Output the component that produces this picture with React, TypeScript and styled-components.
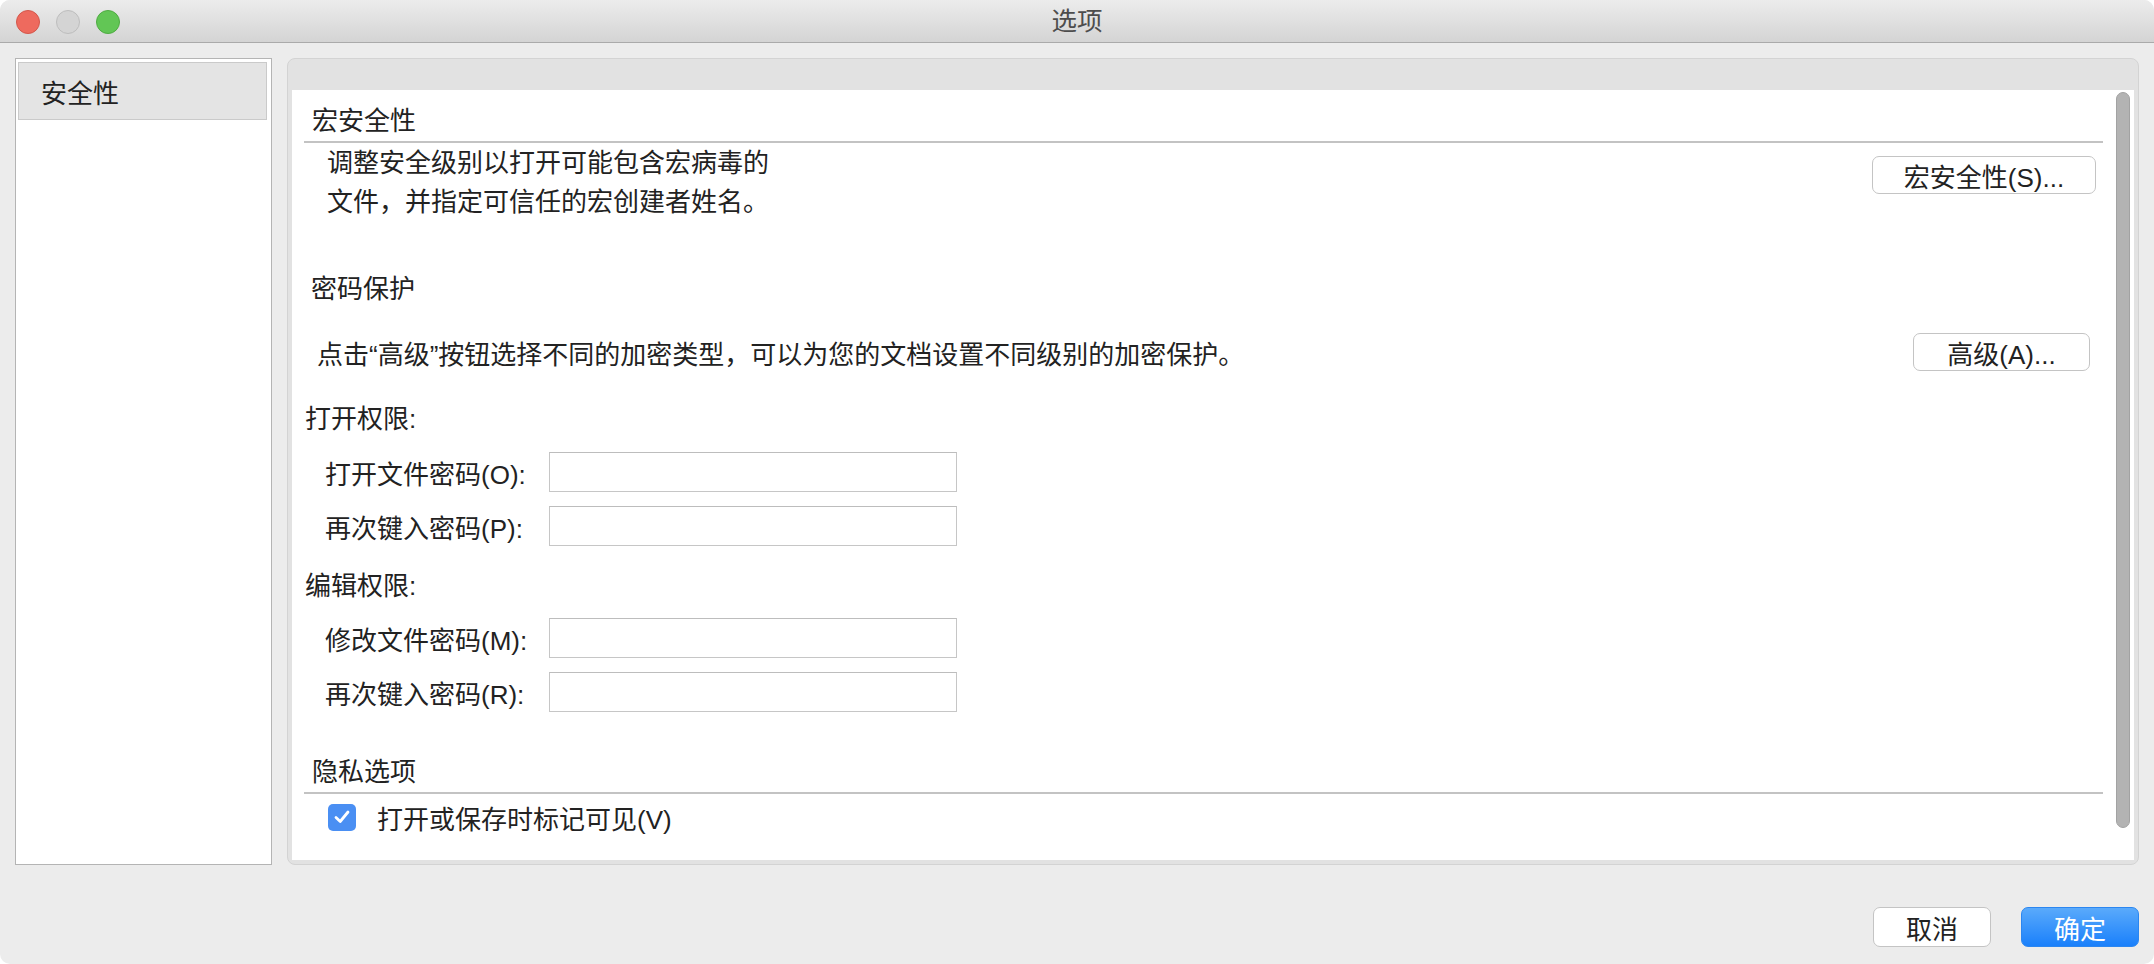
import React from 'react';
import styled, { createGlobalStyle } from 'styled-components';

const GlobalStyle = createGlobalStyle`
    html, body {
        margin: 0;
        padding: 0;
        background: #ffffff;
    }
    body {
        font-family: "Liberation Sans", "Noto Sans CJK SC", sans-serif;
        color: #222222;
    }
    * {
        box-sizing: border-box;
    }
`

const Window = styled.div`
    width: 2154px;
    height: 964px;
    background-color: #ececec;
    border-radius: 10px;
    overflow: hidden;
    display: flex;
    flex-direction: column;
`

const TitleBar = styled.div`
    height: 43px;
    flex: 0 0 43px;
    background: linear-gradient(180deg, #ececec 0%, #d4d4d4 100%);
    border-bottom: 1px solid #aaaaaa;
    position: relative;
    display: flex;
    align-items: center;
    justify-content: center;
`

const Lights = styled.div`
    position: absolute;
    left: 16px;
    top: 10px;
    display: flex;
    gap: 16px;
`

const Light = styled.span<{ color: string; edge: string }>`
    width: 24px;
    height: 24px;
    border-radius: 50%;
    background-color: ${(props) => props.color};
    border: 1px solid ${(props) => props.edge};
`

const Title = styled.div`
    font-size: 25.5px;
    color: #4d4d4d;
    line-height: 43px;
`

const Body = styled.div`
    flex: 1;
    display: flex;
    gap: 15px;
    padding: 15px 15px 0 15px;
`

const Sidebar = styled.div`
    width: 257px;
    background-color: #ffffff;
    border: 1px solid #b4b4b4;
    padding: 3px 4px 0 2px;
`

const SideItem = styled.div<{ active?: boolean }>`
    height: 58px;
    display: flex;
    align-items: center;
    padding-left: 22px;
    font-size: 26px;
    background-color: ${(props) => props.active ? '#e4e4e4' : 'transparent'};
    border: 1px solid ${(props) => props.active ? '#cacaca' : 'transparent'};
`

const Panel = styled.div`
    flex: 1;
    background-color: #e2e2e2;
    border: 1px solid #d3d3d3;
    border-radius: 8px;
    padding: 31px 4px 4px 4px;
    display: flex;
`

const PanelInner = styled.div`
    flex: 1;
    background-color: #ffffff;
    display: flex;
`

const Content = styled.div`
    flex: 1;
    padding: 12px 13px 0 12px;
    font-size: 26px;
`

const Scrollbar = styled.div`
    width: 18px;
    padding: 2px 4px 0 0;
`

const Thumb = styled.div`
    width: 14px;
    height: 736px;
    border-radius: 7px;
    background-color: #b3b3b3;
    border: 1px solid #a2a2a2;
`

const Heading = styled.div<{ indent: number; top: number }>`
    line-height: 38px;
    height: 38px;
    padding-left: ${(props) => props.indent}px;
    margin-top: ${(props) => props.top}px;
`

const Rule = styled.div`
    height: 2px;
    margin-top: 1px;
    background-color: #c3c3c3;
`

const MacroRow = styled.div`
    display: flex;
    justify-content: space-between;
    align-items: flex-start;
    padding: 1px 7px 0 23px;
`

const Desc = styled.div`
    line-height: 39px;
`

const Button = styled.button<{ w: number; primary?: boolean }>`
    width: ${(props) => props.w}px;
    height: ${(props) => props.primary !== undefined ? 40 : 38}px;
    font-family: inherit;
    font-size: 26px;
    color: ${(props) => props.primary ? '#ffffff' : '#222222'};
    background: ${(props) => props.primary
        ? 'linear-gradient(180deg, #5aaafb 0%, #1a80fb 100%)'
        : '#ffffff'};
    border: 1px solid ${(props) => props.primary ? '#2b86f0' : '#c4c4c4'};
    border-radius: 7px;
    padding: 0;
    cursor: pointer;
`

const MacroButton = styled(Button)`
    margin-top: 12px;
`

const AdvRow = styled.div`
    display: flex;
    justify-content: space-between;
    align-items: center;
    height: 38px;
    margin-top: 25px;
    padding: 0 13px 0 13px;
`

const FieldRow = styled.div<{ top: number }>`
    display: flex;
    align-items: center;
    height: 40px;
    margin-top: ${(props) => props.top}px;
    padding-left: 21px;
`

const FieldLabel = styled.label`
    width: 224px;
`

const PasswordInput = styled.input`
    width: 408px;
    height: 40px;
    border: 1px solid #c6c6c6;
    border-top-color: #bdbdbd;
    background: #ffffff;
    outline: none;
    font-size: 22px;
    padding: 0 6px;
`

const CheckRow = styled.label`
    display: flex;
    align-items: center;
    height: 38px;
    margin-top: 4px;
    padding-left: 24px;
    gap: 21px;
`

const CheckBox = styled.span`
    width: 28px;
    height: 27px;
    border-radius: 5px;
    background-color: #4a8ff3;
    display: flex;
    align-items: center;
    justify-content: center;
`

const Footer = styled.div`
    flex: 0 0 99px;
    display: flex;
    justify-content: flex-end;
    gap: 30px;
    padding: 42px 15px 17px 0;
`

const fields1 = [
    { label: '打开文件密码(O):', top: 14 },
    { label: '再次键入密码(P):', top: 14 },
]

const fields2 = [
    { label: '修改文件密码(M):', top: 13 },
    { label: '再次键入密码(R):', top: 14 },
]

export default function App() {
    return (
        <>
            <GlobalStyle />
            <Window>
                <TitleBar>
                    <Lights>
                        <Light color="#ee6a5e" edge="#d3574b" />
                        <Light color="#d4d4d4" edge="#bdbdbd" />
                        <Light color="#62c655" edge="#4fab42" />
                    </Lights>
                    <Title>选项</Title>
                </TitleBar>
                <Body>
                    <Sidebar>
                        <SideItem active>安全性</SideItem>
                    </Sidebar>
                    <Panel>
                        <PanelInner>
                            <Content>
                                <Heading indent={8} top={0}>宏安全性</Heading>
                                <Rule />
                                <MacroRow>
                                    <Desc>
                                        调整安全级别以打开可能包含宏病毒的<br />
                                        文件，并指定可信任的宏创建者姓名。
                                    </Desc>
                                    <MacroButton w={224}>宏安全性(S)...</MacroButton>
                                </MacroRow>

                                <Heading indent={7} top={48}>密码保护</Heading>
                                <AdvRow>
                                    <span>点击“高级”按钮选择不同的加密类型，可以为您的文档设置不同级别的加密保护。</span>
                                    <Button w={177}>高级(A)...</Button>
                                </AdvRow>

                                <Heading indent={1} top={29}>打开权限:</Heading>
                                {fields1.map((f) => (
                                    <FieldRow key={f.label} top={f.top}>
                                        <FieldLabel>{f.label}</FieldLabel>
                                        <PasswordInput type="password" />
                                    </FieldRow>
                                ))}

                                <Heading indent={1} top={21}>编辑权限:</Heading>
                                {fields2.map((f) => (
                                    <FieldRow key={f.label} top={f.top}>
                                        <FieldLabel>{f.label}</FieldLabel>
                                        <PasswordInput type="password" />
                                    </FieldRow>
                                ))}

                                <Heading indent={8} top={41}>隐私选项</Heading>
                                <Rule />
                                <CheckRow>
                                    <CheckBox>
                                        <svg width="18" height="16" viewBox="0 0 18 16">
                                            <path d="M3 8.5 L7.2 12.5 L15 3" fill="none" stroke="#ffffff" strokeWidth="2.8" strokeLinecap="round" strokeLinejoin="round" />
                                        </svg>
                                    </CheckBox>
                                    <span>打开或保存时标记可见(V)</span>
                                </CheckRow>
                            </Content>
                            <Scrollbar>
                                <Thumb />
                            </Scrollbar>
                        </PanelInner>
                    </Panel>
                </Body>
                <Footer>
                    <Button w={118} primary={false}>取消</Button>
                    <Button w={118} primary>确定</Button>
                </Footer>
            </Window>
        </>
    );
}
